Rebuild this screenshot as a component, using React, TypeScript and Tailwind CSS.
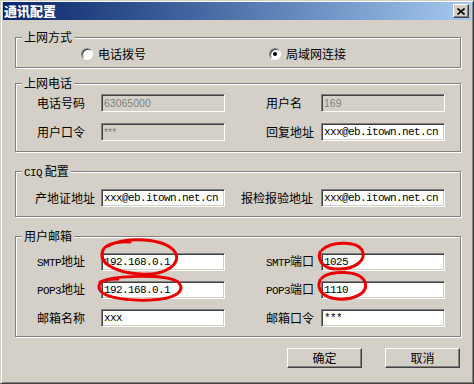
import React from "react";

const cjk = '"Noto Sans CJK SC", "Noto Sans", sans-serif';
const mono = '"Liberation Mono", "Noto Sans CJK SC", monospace';

const Label = ({ children }: { children: React.ReactNode }) => (
  <span className="text-[12px] leading-[14px] text-black whitespace-nowrap">{children}</span>
);

// Latin part of a label, like the half-width letters of a bitmap font
const Latin = ({ children }: { children: React.ReactNode }) => (
  <span className="text-[11px] tracking-[-0.6px]" style={{ fontFamily: mono }}>
    {children}
  </span>
);

const Field = ({ value, disabled = false }: { value: string; disabled?: boolean }) => (
  <input
    readOnly
    value={value}
    disabled={disabled}
    className={`h-[18px] w-[124px] border border-t-[#808080] border-l-[#808080] border-b-white border-r-white shadow-[inset_1px_1px_0_#404040,inset_-1px_-1px_0_#d4d0c8] pl-[2px] outline-none ${
      disabled
        ? "bg-[#d4d0c8] text-[#808080] text-[10.5px] [font-family:'Liberation_Sans',sans-serif]"
        : "bg-white text-black text-[11px] tracking-[-0.6px] [font-family:'Liberation_Mono',monospace]"
    }`}
  />
);

const Group = ({
  title,
  className,
  children,
}: {
  title: React.ReactNode;
  className: string;
  children: React.ReactNode;
}) => (
  <div
    className={`relative ml-[12px] w-[446px] border border-[#808080] shadow-[inset_1px_1px_0_#fff,1px_1px_0_#fff] ${className}`}
  >
    <span className="absolute -top-[8px] left-[6px] bg-[#d4d0c8] px-[2px] text-[12px] leading-[14px] text-black">
      {title}
    </span>
    {children}
  </div>
);

const Radio = ({ checked, label }: { checked?: boolean; label: string }) => (
  <div className="flex items-center gap-[5px]">
    <span className="flex h-[12px] w-[12px] items-center justify-center rounded-full border border-t-[#808080] border-l-[#808080] border-b-white border-r-white bg-white shadow-[inset_1px_1px_0_#404040]">
      {checked && <span className="h-[4px] w-[4px] rounded-full bg-black" />}
    </span>
    <Label>{label}</Label>
  </div>
);

const Button = ({ children }: { children: React.ReactNode }) => (
  <button className="flex h-[20px] w-[75px] items-center justify-center border border-t-white border-l-white border-b-[#404040] border-r-[#404040] bg-[#d4d0c8] shadow-[inset_-1px_-1px_0_#808080] text-[12px] text-black">
    {children}
  </button>
);

export default function App() {
  return (
    <div
      className="relative flex h-[384px] w-[474px] flex-col border border-t-[#d4d0c8] border-l-[#d4d0c8] border-b-[#404040] border-r-[#404040] bg-[#d4d0c8] px-[2px] py-[1px] shadow-[inset_1px_1px_0_#fff,inset_-1px_-1px_0_#808080]"
      style={{ fontFamily: cjk }}
    >
      {/* title bar */}
      <div className="flex h-[18px] items-center justify-between bg-gradient-to-r from-[#0a246a] to-[#a6caf0] pl-[1px] pr-[2px]">
        <span className="text-[13px] font-black leading-[16px] text-white">通讯配置</span>
        <span className="flex h-[14px] w-[16px] items-center justify-center border border-t-white border-l-white border-b-[#404040] border-r-[#404040] bg-[#d4d0c8] shadow-[inset_-1px_-1px_0_#808080]">
          <svg width="8" height="7" viewBox="0 0 8 7">
            <path d="M0.5 0.5 L7.5 6.5 M7.5 0.5 L0.5 6.5" stroke="#000" strokeWidth="1.6" />
          </svg>
        </span>
      </div>

      <Group title="上网方式" className="mt-[17px] pt-[7px] pb-[4px]">
        <div className="flex h-[18px] items-center pl-[65px]">
          <div className="w-[188px]">
            <Radio label="电话拨号" />
          </div>
          <Radio checked label="局域网连接" />
        </div>
      </Group>

      <Group title="上网电话" className="mt-[15px] pt-[10px] pb-[10px]">
        <div className="grid grid-cols-[64px_124px_41px_55px_124px] items-center gap-y-[11px] pl-[21px]">
          <Label>电话号码</Label>
          <Field value="63065000" disabled />
          <span />
          <Label>用户名</Label>
          <Field value="169" disabled />
          <Label>用户口令</Label>
          <Field value="***" disabled />
          <span />
          <Label>回复地址</Label>
          <Field value="xxx@eb.itown.net.cn" />
        </div>
      </Group>

      <Group
        title={
          <>
            <Latin>CIQ</Latin> 配置
          </>
        }
        className="mt-[19px] pt-[17px] pb-[9px]"
      >
        <div className="grid grid-cols-[66px_124px_16px_80px_124px] items-center pl-[19px]">
          <Label>产地证地址</Label>
          <Field value="xxx@eb.itown.net.cn" />
          <span />
          <Label>报检报验地址</Label>
          <Field value="xxx@eb.itown.net.cn" />
        </div>
      </Group>

      <Group title="用户邮箱" className="mt-[19px] pt-[16px] pb-[9px]">
        <div className="grid grid-cols-[64px_124px_41px_55px_124px] items-center gap-y-[10px] pl-[21px]">
          <Label>
            <Latin>SMTP</Latin>地址
          </Label>
          <Field value="192.168.0.1" />
          <span />
          <Label>
            <Latin>SMTP</Latin>端口
          </Label>
          <Field value="1025" />
          <Label>
            <Latin>POP3</Latin>地址
          </Label>
          <Field value="192.168.0.1" />
          <span />
          <Label>
            <Latin>POP3</Latin>端口
          </Label>
          <Field value="1110" />
          <Label>邮箱名称</Label>
          <Field value="xxx" />
          <span />
          <Label>邮箱口令</Label>
          <Field value="***" />
        </div>
      </Group>

      <div className="mt-[11px] flex justify-end gap-[23px] pr-[11px]">
        <Button>确定</Button>
        <Button>取消</Button>
      </div>

      {/* hand-drawn red marks over the fields */}
      <svg
        className="pointer-events-none absolute left-[-1px] top-[-1px]"
        width="474"
        height="384"
        viewBox="0 0 474 384"
        fill="none"
        stroke="#e80000"
        strokeWidth="3"
        strokeLinecap="round"
      >
        <path d="M108 246 C125 236 165 238 175 252 C182 264 165 276 140 274 C112 272 98 262 103 250 C106 244 118 241 130 242" />
        <path d="M100 282 C115 275 165 274 178 282 C186 290 178 299 150 300 C120 301 98 296 99 286 C100 281 108 279 118 279" />
        <path d="M322 250 C330 242 356 240 362 250 C367 260 355 269 340 269 C325 270 317 262 320 252" />
        <path d="M322 278 C330 270 360 270 365 282 C369 294 352 300 338 299 C324 298 316 290 320 280" />
      </svg>
    </div>
  );
}
